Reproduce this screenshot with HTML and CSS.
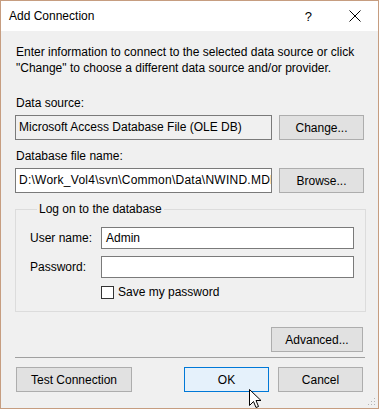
FILE: index.html
```html
<!DOCTYPE html>
<html lang="en">
<head>
    <meta charset="UTF-8">
    <title>Add Connection</title>
    <link rel="stylesheet" href="styles.css">
</head>
<body>
    <div class="window">
        <div class="titlebar">
            <span class="title">Add Connection</span>
            <span class="help">?</span>
            <svg class="close" width="12" height="12" viewBox="0 0 12 12">
                <path d="M0.5 0.5 L11.5 11.5 M11.5 0.5 L0.5 11.5" stroke="#000" stroke-width="1" fill="none"/>
            </svg>
        </div>

        <div class="content">
            <p class="intro">Enter information to connect to the selected data source or click<br>"Change" to choose a different data source and/or provider.</p>

            <div class="label">Data source:</div>
            <div class="row">
                <div class="textbox readonly">Microsoft Access Database File (OLE DB)</div>
                <button class="btn">Change...</button>
            </div>

            <div class="label">Database file name:</div>
            <div class="row">
                <div class="textbox path">D:\Work_Vol4\svn\Common\Data\NWIND.MDB</div>
                <button class="btn">Browse...</button>
            </div>

            <fieldset class="group">
                <legend>Log on to the database</legend>
                <div class="field">
                    <span class="field-label">User name:</span>
                    <div class="input">Admin</div>
                </div>
                <div class="field">
                    <span class="field-label">Password:</span>
                    <div class="input"></div>
                </div>
                <div class="check">
                    <span class="box"></span>
                    <span>Save my password</span>
                </div>
            </fieldset>

            <div class="advanced-row">
                <button class="btn wide">Advanced...</button>
            </div>

            <div class="separator"></div>

            <div class="footer">
                <button class="btn test">Test Connection</button>
                <div class="footer-right">
                    <button class="btn default">OK</button>
                    <button class="btn">Cancel</button>
                </div>
            </div>
        </div>

        <svg class="grip" width="8" height="8" viewBox="0 0 8 8">
            <rect x="6" y="0" width="1" height="1" fill="#b5b5b5"/>
            <rect x="3" y="3" width="1" height="1" fill="#b5b5b5"/>
            <rect x="6" y="3" width="1" height="1" fill="#b5b5b5"/>
            <rect x="0" y="6" width="1" height="1" fill="#b5b5b5"/>
            <rect x="3" y="6" width="1" height="1" fill="#b5b5b5"/>
            <rect x="6" y="6" width="1" height="1" fill="#b5b5b5"/>
        </svg>

        <svg class="cursor" width="13" height="20" viewBox="0 0 13 20">
            <path d="M0.5 0.5 L0.5 16.5 L4.5 12.5 L7 18.5 L9.5 17.5 L7 11.5 L12 11.5 Z" fill="#fff" stroke="#000" stroke-width="1" stroke-linejoin="miter"/>
        </svg>
    </div>
</body>
</html>
```

FILE: styles.css
```css
* {
    box-sizing: border-box;
}
body {
    margin: 0;
    font-family: "Liberation Sans", Arial, sans-serif;
    font-size: 12px;
    color: #000;
    background-color: #f0f0f0;
}
.window {
    position: relative;
    width: 379px;
    height: 409px;
    border: 1px solid #c69d80;
    background-color: #f0f0f0;
    overflow: hidden;
}
.titlebar {
    display: flex;
    align-items: center;
    height: 30px;
    padding-left: 8px;
    background-color: #fff;
}
.title {
    flex: 1;
}
.help {
    margin-right: 37px;
    font-size: 13px;
}
.close {
    margin-right: 17px;
}
.content {
    padding: 13px 14px 0 14px;
}
.intro {
    margin: 0;
    line-height: 16px;
    padding-left: 1px;
    white-space: nowrap;
}
.label {
    margin-top: 17px;
    height: 18px;
    padding-top: 2px;
    line-height: 16px;
    padding-left: 1px;
}
.row {
    display: flex;
    gap: 7px;
    margin-top: 4px;
}
.row + .label {
    margin-top: 6px;
}
.textbox {
    width: 257px;
    height: 25px;
    border: 1px solid #7a7a7a;
    background-color: #fff;
    padding: 0 3px;
    line-height: 23px;
    white-space: nowrap;
    overflow: hidden;
}
.textbox.readonly {
    background-color: #f0f0f0;
}
.textbox.path {
    letter-spacing: 0.25px;
}
.btn {
    width: 85px;
    height: 25px;
    border: 1px solid #adadad;
    background-color: #e1e1e1;
    font-family: inherit;
    font-size: 12px;
    color: #000;
    padding: 0;
}
.group {
    margin: 8px 0 0 0;
    padding: 10px 10px 11px 14px;
    width: 351px;
    height: 111px;
    border: 1px solid #dcdcdc;
}
.group legend {
    padding: 0 2px;
    margin-left: 7px;
    line-height: 16px;
}
.field {
    display: flex;
    align-items: center;
    margin-bottom: 7px;
}
.field-label {
    width: 71px;
}
.input {
    width: 253px;
    height: 22px;
    border: 1px solid #7a7a7a;
    background-color: #fff;
    padding: 0 4px;
    line-height: 20px;
}
.check {
    display: flex;
    align-items: center;
    gap: 4px;
    margin-left: 71px;
    margin-top: 2px;
}
.box {
    width: 13px;
    height: 13px;
    border: 1px solid #333;
    background-color: #fff;
}
.advanced-row {
    display: flex;
    justify-content: flex-end;
    margin-top: 15px;
    padding-right: 1px;
}
.btn.wide {
    width: 92px;
}
.separator {
    margin-top: 5px;
    height: 1px;
    width: 350px;
    background-color: #a0a0a0;
}
.footer {
    display: flex;
    justify-content: space-between;
    margin-top: 9px;
    padding-right: 1px;
}
.footer-right {
    display: flex;
    gap: 9px;
}
.btn.test {
    width: 116px;
    margin-left: 1px;
}
.btn.default {
    border-color: #0078d7;
    background-color: #e5f1fb;
}
.grip {
    position: absolute;
    right: 2px;
    bottom: 2px;
}
.cursor {
    position: absolute;
    left: 248px;
    top: 388px;
}
```
